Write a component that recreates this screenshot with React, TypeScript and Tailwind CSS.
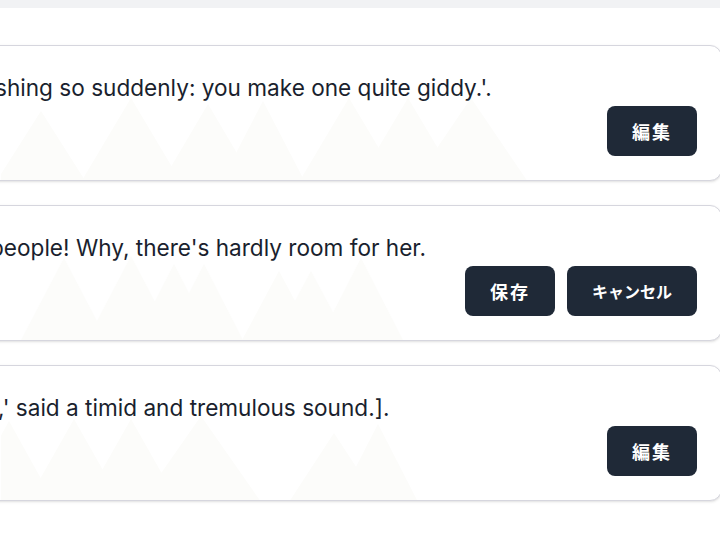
import React from "react";

type Tri = [number, number, number]; // peakX, peakY (local), halfWidth

const cards: {
  text: string;
  indent: string;
  buttons: { label: string; w: string; kana?: boolean }[];
  tris: Tri[];
}[] = [
  {
    text: "shing so suddenly: you make one quite giddy.'.",
    indent: "ml-0",
    buttons: [{ label: "編集", w: "w-[90px]" }],
    tris: [
      [40, 65, 45],
      [130, 52, 50],
      [207, 58, 46],
      [262, 55, 42],
      [348, 52, 50],
      [407, 52, 50],
      [470, 52, 57],
    ],
  },
  {
    text: "people! Why, there's hardly room for her.",
    indent: "-ml-[5px]",
    buttons: [
      { label: "保存", w: "w-[90px]" },
      { label: "キャンセル", w: "w-[130px]", kana: true },
    ],
    tris: [
      [63, 52, 44],
      [130, 50, 45],
      [173, 58, 40],
      [203, 58, 40],
      [278, 65, 38],
      [310, 65, 38],
      [360, 52, 43],
    ],
  },
  {
    text: ",' said a timid and tremulous sound.].",
    indent: "ml-[3px]",
    buttons: [{ label: "編集", w: "w-[90px]" }],
    tris: [
      [8, 55, 45],
      [73, 53, 47],
      [130, 53, 47],
      [200, 50, 60],
      [333, 67, 45],
      [377, 58, 40],
    ],
  },
];

export default function App() {
  return (
    <div className="min-h-[533px] w-[720px] overflow-hidden bg-white font-['Inter','Noto_Sans_CJK_JP',sans-serif]">
      <div className="h-2 bg-[#f1f2f4]" />
      <div className="mt-[37px] -ml-[30px] -mr-[2px] flex flex-col gap-6">
        {cards.map((c, i) => (
          <div
            key={i}
            className="relative overflow-hidden rounded-xl border border-[#d6d6de] bg-white px-6 pt-6 pb-6 shadow-sm"
          >
            <svg
              className="absolute left-[30px] top-0"
              width={720}
              height={136}
              viewBox="0 0 720 136"
            >
              {c.tris.map(([x, y, hw], j) => (
                <polygon
                  key={j}
                  points={`${x - hw},136 ${x},${y} ${x + hw},136`}
                  fill="#fcfcfa"
                />
              ))}
            </svg>
            <div
              className={`relative whitespace-nowrap text-[22.6px] leading-[36px] text-[#1a1f2e] ${c.indent}`}
            >
              {c.text}
            </div>
            <div className="relative flex justify-end gap-3">
              {c.buttons.map((b) => (
                <button
                  key={b.label}
                  className={`flex h-[50px] ${b.w} items-center justify-center rounded-lg bg-[#1f2937] font-['Noto_Sans_CJK_JP',sans-serif] font-bold text-white ${
                    b.kana ? "text-[16px]" : "text-[18px] tracking-[2px]"
                  }`}
                >
                  {b.label}
                </button>
              ))}
            </div>
          </div>
        ))}
      </div>
    </div>
  );
}
